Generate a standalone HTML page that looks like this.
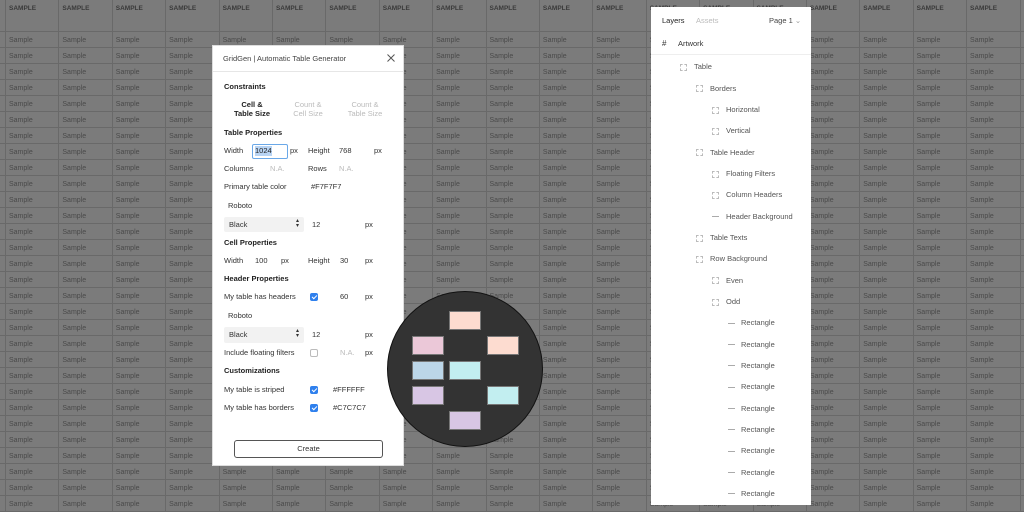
<!DOCTYPE html>
<html><head><meta charset="utf-8"><style>
*{margin:0;padding:0;box-sizing:border-box}
body{width:1024px;height:512px;overflow:hidden;position:relative;font-family:"Liberation Sans",sans-serif;background:#7b7b7b}
.bg{position:absolute;left:0;top:0;width:1024px;height:512px;background:#7b7b7b}
.vl{position:absolute;top:0;width:1px;height:512px;background:#696969}
.hl{position:absolute;left:0;width:1024px;height:1px;background:#696969}
.row{position:absolute;left:9px;display:flex;font-size:7px;color:#4a4a4a;white-space:nowrap}
.row i{font-style:normal;width:53.4px;flex:none}
.row.h{font-weight:bold;font-size:6.5px;color:#3a3a3a}
.dlg{position:absolute;left:212px;top:45px;width:192px;height:421px;background:#fff;border:1px solid #ddd}
.t{position:absolute;font-size:7.5px;color:#333;white-space:nowrap;line-height:10px}
.b{font-weight:bold;color:#222}
.g{color:#bbb}
.cb{position:absolute;width:8px;height:8px;border-radius:2px;background:#2f80ed}
.cb::after{content:"";position:absolute;left:2.5px;top:1px;width:2px;height:4px;border:solid #fff;border-width:0 1.2px 1.2px 0;transform:rotate(45deg)}
.panel{position:absolute;left:651px;top:7px;width:160px;height:498px;background:#fff}
.l{position:absolute;font-size:7.5px;color:#555;white-space:nowrap;line-height:10px}
.ic{position:absolute;width:7px;height:7px;border:1px dashed #bbb}
.dash{position:absolute;width:7px;height:1px;background:#aaa}
.rect{position:absolute;width:32px;height:19px;border:1px solid #777}
</style></head><body>
<div class="bg"></div>
<div class="vl" style="left:5px"></div><div class="vl" style="left:58px"></div><div class="vl" style="left:112px"></div><div class="vl" style="left:165px"></div><div class="vl" style="left:219px"></div><div class="vl" style="left:272px"></div><div class="vl" style="left:325px"></div><div class="vl" style="left:379px"></div><div class="vl" style="left:432px"></div><div class="vl" style="left:486px"></div><div class="vl" style="left:539px"></div><div class="vl" style="left:592px"></div><div class="vl" style="left:646px"></div><div class="vl" style="left:699px"></div><div class="vl" style="left:753px"></div><div class="vl" style="left:806px"></div><div class="vl" style="left:859px"></div><div class="vl" style="left:913px"></div><div class="vl" style="left:966px"></div><div class="vl" style="left:1020px"></div>
<div class="hl" style="top:31px"></div><div class="hl" style="top:47px"></div><div class="hl" style="top:63px"></div><div class="hl" style="top:79px"></div><div class="hl" style="top:95px"></div><div class="hl" style="top:111px"></div><div class="hl" style="top:127px"></div><div class="hl" style="top:143px"></div><div class="hl" style="top:159px"></div><div class="hl" style="top:175px"></div><div class="hl" style="top:191px"></div><div class="hl" style="top:207px"></div><div class="hl" style="top:223px"></div><div class="hl" style="top:239px"></div><div class="hl" style="top:255px"></div><div class="hl" style="top:271px"></div><div class="hl" style="top:287px"></div><div class="hl" style="top:303px"></div><div class="hl" style="top:319px"></div><div class="hl" style="top:335px"></div><div class="hl" style="top:351px"></div><div class="hl" style="top:367px"></div><div class="hl" style="top:383px"></div><div class="hl" style="top:399px"></div><div class="hl" style="top:415px"></div><div class="hl" style="top:431px"></div><div class="hl" style="top:447px"></div><div class="hl" style="top:463px"></div><div class="hl" style="top:479px"></div><div class="hl" style="top:495px"></div><div class="hl" style="top:511px"></div>
<div class="row h" style="top:5px"><i>SAMPLE</i><i>SAMPLE</i><i>SAMPLE</i><i>SAMPLE</i><i>SAMPLE</i><i>SAMPLE</i><i>SAMPLE</i><i>SAMPLE</i><i>SAMPLE</i><i>SAMPLE</i><i>SAMPLE</i><i>SAMPLE</i><i>SAMPLE</i><i>SAMPLE</i><i>SAMPLE</i><i>SAMPLE</i><i>SAMPLE</i><i>SAMPLE</i><i>SAMPLE</i></div>
<div class="row" style="top:37px"><i>Sample</i><i>Sample</i><i>Sample</i><i>Sample</i><i>Sample</i><i>Sample</i><i>Sample</i><i>Sample</i><i>Sample</i><i>Sample</i><i>Sample</i><i>Sample</i><i>Sample</i><i>Sample</i><i>Sample</i><i>Sample</i><i>Sample</i><i>Sample</i><i>Sample</i></div>
<div class="row" style="top:53px"><i>Sample</i><i>Sample</i><i>Sample</i><i>Sample</i><i>Sample</i><i>Sample</i><i>Sample</i><i>Sample</i><i>Sample</i><i>Sample</i><i>Sample</i><i>Sample</i><i>Sample</i><i>Sample</i><i>Sample</i><i>Sample</i><i>Sample</i><i>Sample</i><i>Sample</i></div>
<div class="row" style="top:69px"><i>Sample</i><i>Sample</i><i>Sample</i><i>Sample</i><i>Sample</i><i>Sample</i><i>Sample</i><i>Sample</i><i>Sample</i><i>Sample</i><i>Sample</i><i>Sample</i><i>Sample</i><i>Sample</i><i>Sample</i><i>Sample</i><i>Sample</i><i>Sample</i><i>Sample</i></div>
<div class="row" style="top:85px"><i>Sample</i><i>Sample</i><i>Sample</i><i>Sample</i><i>Sample</i><i>Sample</i><i>Sample</i><i>Sample</i><i>Sample</i><i>Sample</i><i>Sample</i><i>Sample</i><i>Sample</i><i>Sample</i><i>Sample</i><i>Sample</i><i>Sample</i><i>Sample</i><i>Sample</i></div>
<div class="row" style="top:101px"><i>Sample</i><i>Sample</i><i>Sample</i><i>Sample</i><i>Sample</i><i>Sample</i><i>Sample</i><i>Sample</i><i>Sample</i><i>Sample</i><i>Sample</i><i>Sample</i><i>Sample</i><i>Sample</i><i>Sample</i><i>Sample</i><i>Sample</i><i>Sample</i><i>Sample</i></div>
<div class="row" style="top:117px"><i>Sample</i><i>Sample</i><i>Sample</i><i>Sample</i><i>Sample</i><i>Sample</i><i>Sample</i><i>Sample</i><i>Sample</i><i>Sample</i><i>Sample</i><i>Sample</i><i>Sample</i><i>Sample</i><i>Sample</i><i>Sample</i><i>Sample</i><i>Sample</i><i>Sample</i></div>
<div class="row" style="top:133px"><i>Sample</i><i>Sample</i><i>Sample</i><i>Sample</i><i>Sample</i><i>Sample</i><i>Sample</i><i>Sample</i><i>Sample</i><i>Sample</i><i>Sample</i><i>Sample</i><i>Sample</i><i>Sample</i><i>Sample</i><i>Sample</i><i>Sample</i><i>Sample</i><i>Sample</i></div>
<div class="row" style="top:149px"><i>Sample</i><i>Sample</i><i>Sample</i><i>Sample</i><i>Sample</i><i>Sample</i><i>Sample</i><i>Sample</i><i>Sample</i><i>Sample</i><i>Sample</i><i>Sample</i><i>Sample</i><i>Sample</i><i>Sample</i><i>Sample</i><i>Sample</i><i>Sample</i><i>Sample</i></div>
<div class="row" style="top:165px"><i>Sample</i><i>Sample</i><i>Sample</i><i>Sample</i><i>Sample</i><i>Sample</i><i>Sample</i><i>Sample</i><i>Sample</i><i>Sample</i><i>Sample</i><i>Sample</i><i>Sample</i><i>Sample</i><i>Sample</i><i>Sample</i><i>Sample</i><i>Sample</i><i>Sample</i></div>
<div class="row" style="top:181px"><i>Sample</i><i>Sample</i><i>Sample</i><i>Sample</i><i>Sample</i><i>Sample</i><i>Sample</i><i>Sample</i><i>Sample</i><i>Sample</i><i>Sample</i><i>Sample</i><i>Sample</i><i>Sample</i><i>Sample</i><i>Sample</i><i>Sample</i><i>Sample</i><i>Sample</i></div>
<div class="row" style="top:197px"><i>Sample</i><i>Sample</i><i>Sample</i><i>Sample</i><i>Sample</i><i>Sample</i><i>Sample</i><i>Sample</i><i>Sample</i><i>Sample</i><i>Sample</i><i>Sample</i><i>Sample</i><i>Sample</i><i>Sample</i><i>Sample</i><i>Sample</i><i>Sample</i><i>Sample</i></div>
<div class="row" style="top:213px"><i>Sample</i><i>Sample</i><i>Sample</i><i>Sample</i><i>Sample</i><i>Sample</i><i>Sample</i><i>Sample</i><i>Sample</i><i>Sample</i><i>Sample</i><i>Sample</i><i>Sample</i><i>Sample</i><i>Sample</i><i>Sample</i><i>Sample</i><i>Sample</i><i>Sample</i></div>
<div class="row" style="top:229px"><i>Sample</i><i>Sample</i><i>Sample</i><i>Sample</i><i>Sample</i><i>Sample</i><i>Sample</i><i>Sample</i><i>Sample</i><i>Sample</i><i>Sample</i><i>Sample</i><i>Sample</i><i>Sample</i><i>Sample</i><i>Sample</i><i>Sample</i><i>Sample</i><i>Sample</i></div>
<div class="row" style="top:245px"><i>Sample</i><i>Sample</i><i>Sample</i><i>Sample</i><i>Sample</i><i>Sample</i><i>Sample</i><i>Sample</i><i>Sample</i><i>Sample</i><i>Sample</i><i>Sample</i><i>Sample</i><i>Sample</i><i>Sample</i><i>Sample</i><i>Sample</i><i>Sample</i><i>Sample</i></div>
<div class="row" style="top:261px"><i>Sample</i><i>Sample</i><i>Sample</i><i>Sample</i><i>Sample</i><i>Sample</i><i>Sample</i><i>Sample</i><i>Sample</i><i>Sample</i><i>Sample</i><i>Sample</i><i>Sample</i><i>Sample</i><i>Sample</i><i>Sample</i><i>Sample</i><i>Sample</i><i>Sample</i></div>
<div class="row" style="top:277px"><i>Sample</i><i>Sample</i><i>Sample</i><i>Sample</i><i>Sample</i><i>Sample</i><i>Sample</i><i>Sample</i><i>Sample</i><i>Sample</i><i>Sample</i><i>Sample</i><i>Sample</i><i>Sample</i><i>Sample</i><i>Sample</i><i>Sample</i><i>Sample</i><i>Sample</i></div>
<div class="row" style="top:293px"><i>Sample</i><i>Sample</i><i>Sample</i><i>Sample</i><i>Sample</i><i>Sample</i><i>Sample</i><i>Sample</i><i>Sample</i><i>Sample</i><i>Sample</i><i>Sample</i><i>Sample</i><i>Sample</i><i>Sample</i><i>Sample</i><i>Sample</i><i>Sample</i><i>Sample</i></div>
<div class="row" style="top:309px"><i>Sample</i><i>Sample</i><i>Sample</i><i>Sample</i><i>Sample</i><i>Sample</i><i>Sample</i><i>Sample</i><i>Sample</i><i>Sample</i><i>Sample</i><i>Sample</i><i>Sample</i><i>Sample</i><i>Sample</i><i>Sample</i><i>Sample</i><i>Sample</i><i>Sample</i></div>
<div class="row" style="top:325px"><i>Sample</i><i>Sample</i><i>Sample</i><i>Sample</i><i>Sample</i><i>Sample</i><i>Sample</i><i>Sample</i><i>Sample</i><i>Sample</i><i>Sample</i><i>Sample</i><i>Sample</i><i>Sample</i><i>Sample</i><i>Sample</i><i>Sample</i><i>Sample</i><i>Sample</i></div>
<div class="row" style="top:341px"><i>Sample</i><i>Sample</i><i>Sample</i><i>Sample</i><i>Sample</i><i>Sample</i><i>Sample</i><i>Sample</i><i>Sample</i><i>Sample</i><i>Sample</i><i>Sample</i><i>Sample</i><i>Sample</i><i>Sample</i><i>Sample</i><i>Sample</i><i>Sample</i><i>Sample</i></div>
<div class="row" style="top:357px"><i>Sample</i><i>Sample</i><i>Sample</i><i>Sample</i><i>Sample</i><i>Sample</i><i>Sample</i><i>Sample</i><i>Sample</i><i>Sample</i><i>Sample</i><i>Sample</i><i>Sample</i><i>Sample</i><i>Sample</i><i>Sample</i><i>Sample</i><i>Sample</i><i>Sample</i></div>
<div class="row" style="top:373px"><i>Sample</i><i>Sample</i><i>Sample</i><i>Sample</i><i>Sample</i><i>Sample</i><i>Sample</i><i>Sample</i><i>Sample</i><i>Sample</i><i>Sample</i><i>Sample</i><i>Sample</i><i>Sample</i><i>Sample</i><i>Sample</i><i>Sample</i><i>Sample</i><i>Sample</i></div>
<div class="row" style="top:389px"><i>Sample</i><i>Sample</i><i>Sample</i><i>Sample</i><i>Sample</i><i>Sample</i><i>Sample</i><i>Sample</i><i>Sample</i><i>Sample</i><i>Sample</i><i>Sample</i><i>Sample</i><i>Sample</i><i>Sample</i><i>Sample</i><i>Sample</i><i>Sample</i><i>Sample</i></div>
<div class="row" style="top:405px"><i>Sample</i><i>Sample</i><i>Sample</i><i>Sample</i><i>Sample</i><i>Sample</i><i>Sample</i><i>Sample</i><i>Sample</i><i>Sample</i><i>Sample</i><i>Sample</i><i>Sample</i><i>Sample</i><i>Sample</i><i>Sample</i><i>Sample</i><i>Sample</i><i>Sample</i></div>
<div class="row" style="top:421px"><i>Sample</i><i>Sample</i><i>Sample</i><i>Sample</i><i>Sample</i><i>Sample</i><i>Sample</i><i>Sample</i><i>Sample</i><i>Sample</i><i>Sample</i><i>Sample</i><i>Sample</i><i>Sample</i><i>Sample</i><i>Sample</i><i>Sample</i><i>Sample</i><i>Sample</i></div>
<div class="row" style="top:437px"><i>Sample</i><i>Sample</i><i>Sample</i><i>Sample</i><i>Sample</i><i>Sample</i><i>Sample</i><i>Sample</i><i>Sample</i><i>Sample</i><i>Sample</i><i>Sample</i><i>Sample</i><i>Sample</i><i>Sample</i><i>Sample</i><i>Sample</i><i>Sample</i><i>Sample</i></div>
<div class="row" style="top:453px"><i>Sample</i><i>Sample</i><i>Sample</i><i>Sample</i><i>Sample</i><i>Sample</i><i>Sample</i><i>Sample</i><i>Sample</i><i>Sample</i><i>Sample</i><i>Sample</i><i>Sample</i><i>Sample</i><i>Sample</i><i>Sample</i><i>Sample</i><i>Sample</i><i>Sample</i></div>
<div class="row" style="top:469px"><i>Sample</i><i>Sample</i><i>Sample</i><i>Sample</i><i>Sample</i><i>Sample</i><i>Sample</i><i>Sample</i><i>Sample</i><i>Sample</i><i>Sample</i><i>Sample</i><i>Sample</i><i>Sample</i><i>Sample</i><i>Sample</i><i>Sample</i><i>Sample</i><i>Sample</i></div>
<div class="row" style="top:485px"><i>Sample</i><i>Sample</i><i>Sample</i><i>Sample</i><i>Sample</i><i>Sample</i><i>Sample</i><i>Sample</i><i>Sample</i><i>Sample</i><i>Sample</i><i>Sample</i><i>Sample</i><i>Sample</i><i>Sample</i><i>Sample</i><i>Sample</i><i>Sample</i><i>Sample</i></div>
<div class="row" style="top:501px"><i>Sample</i><i>Sample</i><i>Sample</i><i>Sample</i><i>Sample</i><i>Sample</i><i>Sample</i><i>Sample</i><i>Sample</i><i>Sample</i><i>Sample</i><i>Sample</i><i>Sample</i><i>Sample</i><i>Sample</i><i>Sample</i><i>Sample</i><i>Sample</i><i>Sample</i></div>

<div class="dlg"></div>
<div class="t" style="left:223px;top:54px;font-size:7.5px;color:#444">GridGen | Automatic Table Generator</div>
<svg style="position:absolute;left:387px;top:54px" width="8" height="8" viewBox="0 0 8 8"><path d="M0.5 0.5L7.5 7.5M7.5 0.5L0.5 7.5" stroke="#555" stroke-width="1"/></svg>
<div style="position:absolute;left:213px;top:71px;width:190px;height:1px;background:#e6e6e6"></div>
<div class="t b" style="left:224px;top:82px">Constraints</div>
<div class="t b" style="left:232px;top:100px;text-align:center;width:40px;line-height:9px">Cell &amp;<br>Table Size</div>
<div class="t g" style="left:288px;top:100px;text-align:center;width:40px;line-height:9px">Count &amp;<br>Cell Size</div>
<div class="t g" style="left:342px;top:100px;text-align:center;width:46px;line-height:9px">Count &amp;<br>Table Size</div>
<div class="t b" style="left:224px;top:128px">Table Properties</div>
<div class="t" style="left:224px;top:146px">Width</div>
<div style="position:absolute;left:252px;top:144px;width:36px;height:15px;border:1.5px solid #6aa8e8;border-radius:2px"></div>
<div class="t" style="left:255px;top:146px;background:#b8d4f4;color:#222">1024</div>
<div class="t" style="left:290px;top:146px">px</div>
<div class="t" style="left:308px;top:146px">Height</div>
<div class="t" style="left:339px;top:146px">768</div>
<div class="t" style="left:374px;top:146px">px</div>
<div class="t" style="left:224px;top:164px">Columns</div>
<div class="t g" style="left:270px;top:164px">N.A.</div>
<div class="t" style="left:308px;top:164px">Rows</div>
<div class="t g" style="left:339px;top:164px">N.A.</div>
<div class="t" style="left:224px;top:182px">Primary table color</div>
<div class="t" style="left:311px;top:182px">#F7F7F7</div>
<div class="t" style="left:228px;top:201px">Roboto</div>
<div style="position:absolute;left:224px;top:217px;width:80px;height:15px;background:#f2f2f2;border-radius:2px"></div>
<div class="t" style="left:229px;top:220px">Black</div>
<div class="t" style="left:296px;top:219px;font-size:6px;line-height:5px">▴<br>▾</div>
<div class="t" style="left:312px;top:220px">12</div>
<div class="t" style="left:365px;top:220px">px</div>
<div class="t b" style="left:224px;top:238px">Cell Properties</div>
<div class="t" style="left:224px;top:256px">Width</div>
<div class="t" style="left:255px;top:256px">100</div>
<div class="t" style="left:281px;top:256px">px</div>
<div class="t" style="left:308px;top:256px">Height</div>
<div class="t" style="left:340px;top:256px">30</div>
<div class="t" style="left:365px;top:256px">px</div>
<div class="t b" style="left:224px;top:274px">Header Properties</div>
<div class="t" style="left:224px;top:292px">My table has headers</div>
<div class="cb" style="left:310px;top:293px"></div>
<div class="t" style="left:340px;top:292px">60</div>
<div class="t" style="left:365px;top:292px">px</div>
<div class="t" style="left:228px;top:311px">Roboto</div>
<div style="position:absolute;left:224px;top:327px;width:80px;height:16px;background:#f2f2f2;border-radius:2px"></div>
<div class="t" style="left:229px;top:330px">Black</div>
<div class="t" style="left:296px;top:329px;font-size:6px;line-height:5px">▴<br>▾</div>
<div class="t" style="left:312px;top:330px">12</div>
<div class="t" style="left:365px;top:330px">px</div>
<div class="t" style="left:224px;top:348px">Include floating filters</div>
<div style="position:absolute;left:310px;top:349px;width:8px;height:8px;border:1px solid #bbb;border-radius:2px"></div>
<div class="t g" style="left:340px;top:348px">N.A.</div>
<div class="t" style="left:365px;top:348px">px</div>
<div class="t b" style="left:224px;top:366px">Customizations</div>
<div class="t" style="left:224px;top:385px">My table is striped</div>
<div class="cb" style="left:310px;top:386px"></div>
<div class="t" style="left:333px;top:385px">#FFFFFF</div>
<div class="t" style="left:224px;top:403px">My table has borders</div>
<div class="cb" style="left:310px;top:404px"></div>
<div class="t" style="left:333px;top:403px">#C7C7C7</div>
<div style="position:absolute;left:234px;top:440px;width:149px;height:18px;border:1px solid #555;border-radius:3px"></div>
<div class="t" style="left:234px;top:444px;width:149px;text-align:center">Create</div>

<div style="position:absolute;left:387px;top:291px;width:156px;height:156px;border-radius:50%;background:#333;border:1.5px solid #111"></div>
<div class="rect" style="left:449px;top:311px;background:#fddcd0"></div>
<div class="rect" style="left:412px;top:336px;background:#ebc8d8"></div>
<div class="rect" style="left:487px;top:336px;background:#fddcd0"></div>
<div class="rect" style="left:412px;top:361px;background:#bcd6e8"></div>
<div class="rect" style="left:449px;top:361px;background:#c2eef0"></div>
<div class="rect" style="left:412px;top:386px;background:#d8c6e4"></div>
<div class="rect" style="left:487px;top:386px;background:#c2eef0"></div>
<div class="rect" style="left:449px;top:411px;background:#d8c6e4"></div>

<div class="panel"></div>
<div class="l" style="left:662px;top:16px;color:#222">Layers</div>
<div class="l" style="left:696px;top:16px;color:#bbb">Assets</div>
<div class="l" style="left:769px;top:16px;color:#444">Page 1 <span style="color:#999">⌄</span></div>
<div class="l" style="left:662px;top:39px;color:#333;font-size:8px">#</div>
<div class="l" style="left:678px;top:39px;color:#333">Artwork</div>
<div style="position:absolute;left:651px;top:54px;width:160px;height:1px;background:#eee"></div>
<div class="ic" style="left:680px;top:64px"></div><div class="l" style="left:694px;top:62px">Table</div>
<div class="ic" style="left:696px;top:85px"></div><div class="l" style="left:710px;top:84px">Borders</div>
<div class="ic" style="left:712px;top:107px"></div><div class="l" style="left:726px;top:105px">Horizontal</div>
<div class="ic" style="left:712px;top:128px"></div><div class="l" style="left:726px;top:126px">Vertical</div>
<div class="ic" style="left:696px;top:149px"></div><div class="l" style="left:710px;top:148px">Table Header</div>
<div class="ic" style="left:712px;top:171px"></div><div class="l" style="left:726px;top:169px">Floating Filters</div>
<div class="ic" style="left:712px;top:192px"></div><div class="l" style="left:726px;top:190px">Column Headers</div>
<div class="dash" style="left:712px;top:216px"></div><div class="l" style="left:726px;top:212px">Header Background</div>
<div class="ic" style="left:696px;top:235px"></div><div class="l" style="left:710px;top:233px">Table Texts</div>
<div class="ic" style="left:696px;top:256px"></div><div class="l" style="left:710px;top:254px">Row Background</div>
<div class="ic" style="left:712px;top:277px"></div><div class="l" style="left:726px;top:276px">Even</div>
<div class="ic" style="left:712px;top:299px"></div><div class="l" style="left:726px;top:297px">Odd</div>
<div class="dash" style="left:728px;top:323px"></div><div class="l" style="left:741px;top:318px">Rectangle</div>
<div class="dash" style="left:728px;top:344px"></div><div class="l" style="left:741px;top:340px">Rectangle</div>
<div class="dash" style="left:728px;top:365px"></div><div class="l" style="left:741px;top:361px">Rectangle</div>
<div class="dash" style="left:728px;top:387px"></div><div class="l" style="left:741px;top:382px">Rectangle</div>
<div class="dash" style="left:728px;top:408px"></div><div class="l" style="left:741px;top:404px">Rectangle</div>
<div class="dash" style="left:728px;top:429px"></div><div class="l" style="left:741px;top:425px">Rectangle</div>
<div class="dash" style="left:728px;top:451px"></div><div class="l" style="left:741px;top:446px">Rectangle</div>
<div class="dash" style="left:728px;top:472px"></div><div class="l" style="left:741px;top:468px">Rectangle</div>
<div class="dash" style="left:728px;top:493px"></div><div class="l" style="left:741px;top:489px">Rectangle</div>
</body></html>
